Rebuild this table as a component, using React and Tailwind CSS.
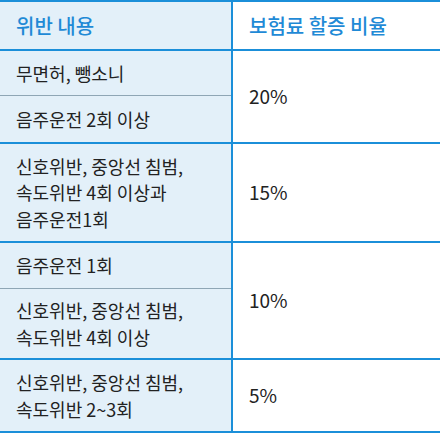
import React from "react";

const groups = [
  { rate: "20%", items: [{ h: "h-[45px]", lines: ["무면허, 뺑소니"] }, { h: "h-[46px]", lines: ["음주운전 2회 이상"] }] },
  { rate: "15%", items: [{ h: "h-[97px]", lines: ["신호위반, 중앙선 침범,", "속도위반 4회 이상과", "음주운전1회"] }] },
  { rate: "10%", items: [{ h: "h-[46px]", lines: ["음주운전 1회"] }, { h: "h-[69px]", lines: ["신호위반, 중앙선 침범,", "속도위반 4회 이상"] }] },
  { rate: "5%", items: [{ h: "h-[71px]", lines: ["신호위반, 중앙선 침범,", "속도위반 2~3회"] }] },
];

const App = () => {
  return (
    <div className="w-[440px] h-[438px] bg-white font-['Noto_Sans_CJK_KR',sans-serif] text-[#222] overflow-hidden">
      <div className="border-t-2 border-[#1b8fd9]">
        <div className="flex h-[49px] border-b-2 border-[#1b8fd9]">
          <div className="w-[233px] border-r-2 border-[#1b8fd9] bg-[#e3f0f9] flex items-center pl-4 text-[20px] font-medium text-[#1f8ad6]">
            위반 내용
          </div>
          <div className="flex-1 flex items-center pl-4 text-[20px] font-medium text-[#1f8ad6]">
            보험료 할증 비율
          </div>
        </div>
        {groups.map((g, gi) => (
          <div key={gi} className="flex border-b-2 border-[#1b8fd9]">
            <div className="w-[233px] border-r-2 border-[#1b8fd9] bg-[#e3f0f9] flex flex-col">
              {g.items.map((it, ii) => (
                <div
                  key={ii}
                  className={`${it.h} flex flex-col justify-center pl-4 text-[18px] leading-[26.5px] ${
                    ii < g.items.length - 1 ? "border-b border-[#8fa6b5]" : ""
                  }`}
                >
                  {it.lines.map((l) => (
                    <div key={l}>{l}</div>
                  ))}
                </div>
              ))}
            </div>
            <div className="flex-1 flex items-center pl-4 text-[19px]">{g.rate}</div>
          </div>
        ))}
      </div>
    </div>
  );
};

export default App;
